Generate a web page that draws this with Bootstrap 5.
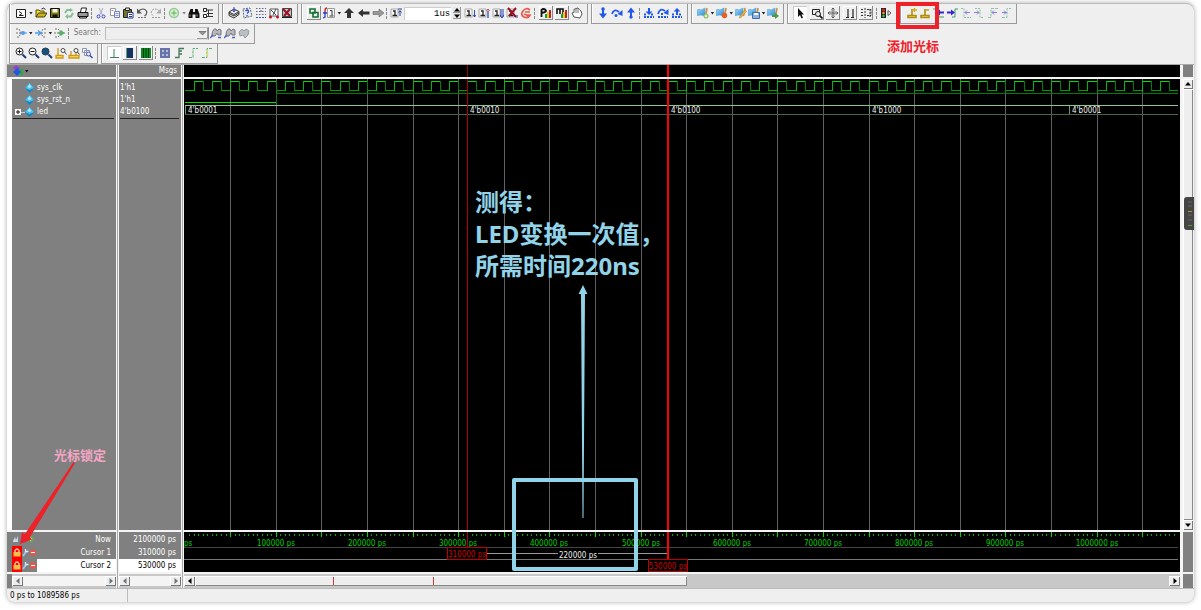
<!DOCTYPE html>
<html lang="zh-CN">
<head>
<meta charset="utf-8">
<meta name="viewport" content="width=device-width, initial-scale=1">
<title>Wave</title>
<link href="https://cdn.jsdelivr.net/npm/bootstrap@5.3.0/dist/css/bootstrap.min.css" rel="stylesheet">
<style>
  :root { --face: #efefef; --pane: #808080; --sky: #91d3e8; --alert: #ee2028; }
  body { font-family: "DejaVu Sans Condensed", "Noto Sans CJK SC", sans-serif; font-size: 8px; line-height: 12px; background: #fff; color: #000; padding: 3px 7px 8px; }
  .app-window { background: var(--face); border-top: 1px solid #bdbdbd; border-radius: 8px; box-shadow: 0 0 5px rgba(0,0,0,.35); height: calc(100vh - 11px); min-height: 300px; }
  button { padding: 0; border: 0; background: none; color: inherit; line-height: 1; }
  .defs { width: 0; height: 0; }

  /* toolbars */
  .tool-rows { padding-left: 2px; height: 60px; }
  .tool-row { gap: 3px; height: 20px; }
  .tool-group { position: relative; padding: 0 4px 1px 5px; border: solid #999; border-width: 0 1px 1px 1px; box-shadow: inset 1px 0 #fff; }
  .g-std { width: 210px; } .g-compile { width: 76px; } .g-sim { width: 287px; } .g-step { width: 97px; }
  .g-mark { width: 93px; } .g-mouse { width: 110px; } .g-cursor { width: 117px; } .g-search { width: 246px; }
  .g-zoom { width: 89px; } .g-format { width: 117px; }
  .ico { width: 12px; height: 12px; flex: none; display: block; }
  .ico svg, .raised svg { width: 12px; height: 12px; display: block; }
  .raised { width: 14px; height: 14px; flex: none; box-shadow: inset -1px -1px #888, inset 1px 1px #fff; padding: 1px; }
  .pressed { background: #fff; box-shadow: inset 1px 1px #ccc; }
  .drop { width: 4px; height: 3px; flex: none; background: #222; clip-path: polygon(0 0, 100% 0, 50% 100%); }
  .split { width: 2px; height: 11px; flex: none; border-left: 1px dashed #888; }
  .faded { opacity: .55; }
  .time-box { width: 47px; height: 13px; border: 1px solid #ccc; border-width: 1px 0 0 1px; padding: 0 1px; text-align: right; font: 9px/12px "Liberation Mono", monospace; background: #fff; }
  .spin { width: 8px; height: 13px; }
  .spin button { width: 8px; height: 6px; background: #e8e8e8; box-shadow: inset -1px -1px #999; }
  .spin svg { display: block; width: 8px; height: 6px; }
  .find-label { color: #777; width: 31px; text-align: center; }
  .find-box { width: 104px; height: 13px; border: 1px solid #bbb; border-right-color: #888; border-bottom-color: #ddd; background: var(--face); appearance: none; }
  .find-wrap { position: relative; height: 13px; }
  .find-wrap svg { position: absolute; right: 1px; top: 1px; width: 11px; height: 11px; pointer-events: none; }
  .mark-frame { position: absolute; left: -5px; top: -2px; width: 43px; height: 27px; border: 4px solid var(--alert); pointer-events: none; }
  .mark-note { position: absolute; left: -14px; top: 32px; font: 700 13px/20px "Noto Sans CJK SC", sans-serif; color: var(--alert); white-space: nowrap; }

  /* wave window */
  .wave-grid { display: grid; grid-template: 12px minmax(0, 1fr) 40px 14px / 109px 62px minmax(0, 1fr) 10px; gap: 2px 3px; padding-right: 1px; border-top: 1px solid #aaa; background: linear-gradient(#aaa, #aaa) 110px 0 / 1px 100% no-repeat, linear-gradient(#aaa, #aaa) 175px 0 / 1px 100% no-repeat, #f4f4f4; }
  .pane { background: var(--pane); color: #fff; overflow: hidden; }
  .names { border-left: 5px solid #fff; position: relative; }
  .sig { height: 12px; white-space: nowrap; }
  .vals .sig { padding-left: 1px; }
  .sig svg { width: 25px; height: 10px; flex: none; }
  .sig-list { padding-top: 3px; }
  .sig-end { border-top: 1px solid #222; margin: 0 2px 0 1px; }
  .now-row, .cur-row { height: 13px; padding-right: 5px; line-height: 14px; }
  .now-row { height: 14px; line-height: 15px; }
  .names-foot { border-left: 5px solid var(--pane); }
  .selected { background: #fff; color: #000; }
  .row-icons { width: 25px; height: 13px; background: var(--pane); flex: none; }
  .row-icons svg { display: block; width: 25px; height: 13px; }
  .screen { background: #000; overflow: hidden; min-width: 0; }
  .screen svg { display: block; width: 100%; height: 100%; }
  .notes { grid-column: 3; grid-row: 1 / 4; position: relative; pointer-events: none; }
  .measure-note { position: absolute; left: 291px; top: 121px; margin: 0; color: var(--sky); font: 700 24px/32px "Noto Sans", "Noto Sans CJK SC", sans-serif; white-space: nowrap; }
  .measure-arrow { position: absolute; left: 394px; bottom: 54px; width: 10px; height: 233px; }
  .measure-frame { position: absolute; left: 328px; bottom: 1px; width: 126px; height: 93px; border: 4px solid var(--sky); border-radius: 2px; }
  .lock-note { position: absolute; left: 47px; bottom: 107px; font: 700 13px/20px "Noto Sans CJK SC", sans-serif; color: #f3a6c3; white-space: nowrap; }
  .notes-left { grid-column: 1; grid-row: 2 / 4; position: relative; pointer-events: none; }
  .lock-arrow { position: absolute; left: 12px; bottom: 27px; width: 60px; height: 84px; }

  /* scroll bars */
  .bar { background: #c8c8c8; display: flex; }
  .bar-h { padding: 2px 0; }
  .bar-h button { width: 11px; flex: none; }
  .bar button { background: #eee; box-shadow: inset 1px 1px #fff, inset -1px -1px #777; display: flex; align-items: center; justify-content: center; }
  .bar button svg { width: 6px; height: 6px; }
  .thumb { background: #eee; box-shadow: inset 1px 1px #fff, inset -1px -1px #888; }
  .hatched { background: #f4f4f4; }
  .bar-names { border-left: 5px solid var(--pane); }
  .thumb-half { width: 492px; position: relative; margin-right: auto; }
  .pin { position: absolute; top: 1px; bottom: 1px; width: 1px; background: #d33; }
  .bar-v { flex-direction: column; position: relative; background: #eee; }
  .bar-v button { height: 10px; flex: none; }
  .dock-tab { position: absolute; left: 1px; top: 118px; width: 10px; height: 33px; background: #454545; border-radius: 3px 0 0 3px; }
  .status { height: 14px; border-top: 1px solid #bbb; padding-left: 3px; line-height: 14px; }
  .status-a { width: 118px; border-right: 1px solid #bbb; }
</style>
</head>
<body>
<svg class="defs position-absolute" aria-hidden="true">
  <defs>
    <linearGradient id="sky" x1="0" y1="0" x2="1" y2="1"><stop offset="0" stop-color="#a5dafa"/><stop offset="1" stop-color="#2f90d4"/></linearGradient>
    <g id="page"><path d="M1.5 2.5h9v8h-9z" fill="#fff" stroke="#222"/><path d="M4 4.5l3 2-3 2M4 8.500h4.500" stroke="#222" fill="none"/></g>
    <g id="flag"><path d="M0 3q2-1.500 4 0l4-2v7q-2 1-4 0l-4 .5z" fill="url(#sky)" stroke="#5ba3d0" stroke-width=".6"/><path d="M10 1L8.500 9" stroke="#c68b3c" stroke-width="1.500"/></g>
    <g id="glass"><circle cx="4.500" cy="4.500" r="3.500" fill="#fff" stroke="#222"/><path d="M7.500 7.500L11 11" stroke="#1e3c78" stroke-width="2"/></g>
    <g id="stand"><path d="M2 8.500h8v2H2zM6 8.500V2" stroke="#b08c10" stroke-width="1.600" fill="#ffe36a"/></g>
    <symbol id="i-new" viewBox="0 0 12 12"><use href="#page"/></symbol>
    <symbol id="i-open" viewBox="0 0 12 12"><path d="M1 10V3h3l1 1h4v2" fill="#f5e04a" stroke="#554d00"/><path d="M1 10l2.500-4H12l-2.500 4z" fill="#c8b420" stroke="#443e00"/><path d="M6.500 2q2-2 4 .5" stroke="#222" fill="none"/></symbol>
    <symbol id="i-save" viewBox="0 0 12 12"><path d="M1.500 1.500h9v9h-9z" fill="#7c7a10" stroke="#111"/><path d="M3.500 2h5v3.500h-5z" fill="#f4f4e0"/><path d="M3.500 7.500h5V10h-5z" fill="#111"/></symbol>
    <symbol id="i-reload" viewBox="0 0 12 12"><path d="M2 6l2-3 4 0M10 6l-2 3.500H4" stroke="#86bd92" stroke-width="2" fill="none"/><path d="M7 1l3 2-3 2zM5 7L2 9.500 5 12z" fill="#86bd92"/></symbol>
    <symbol id="i-print" viewBox="0 0 12 12"><path d="M3.500 5l1-4h5l-1 4" fill="#fff" stroke="#222"/><path d="M1 5.500h10v4H1z" fill="#999" stroke="#111"/><path d="M2.500 9.500h7v1.500h-7z" fill="#ddd" stroke="#111"/></symbol>
    <symbol id="i-cut" viewBox="0 0 12 12"><path d="M4 1l3.500 7M8 1L4.500 8" stroke="#a8a8c8" fill="none"/><circle cx="3.500" cy="9.500" r="1.500" fill="none" stroke="#3948c8"/><circle cx="8.500" cy="9.500" r="1.500" fill="none" stroke="#3948c8"/></symbol>
    <symbol id="i-copy" viewBox="0 0 12 12"><path d="M1.500 1.500h5v7h-5z" fill="#fff" stroke="#999"/><path d="M5.500 4.500h5v6h-5z" fill="#eef" stroke="#7882b4"/><path d="M6.500 6.500h3M6.500 8.500h3M2.500 3.500h2" stroke="#8893c8"/></symbol>
    <symbol id="i-paste" viewBox="0 0 12 12"><path d="M1.500 2.500h8v8h-8z" fill="#7d7420" stroke="#222"/><path d="M3.500 1h4v2.500h-4z" fill="#eee" stroke="#222"/><path d="M5.500 5.500h5.500v5.500H5.500z" fill="#fff" stroke="#223a90"/><path d="M7 7.500h3M7 9.500h3" stroke="#223a90"/></symbol>
    <symbol id="i-undo" viewBox="0 0 12 12"><path d="M2.500 4q5-4 8 0 1 3-2 5" fill="none" stroke="#555" stroke-width="1.200"/><path d="M1 1.500v5h5z" fill="#555"/><path d="M2 10.500h8" stroke="#777" stroke-dasharray="2 1"/></symbol>
    <symbol id="i-redo" viewBox="0 0 12 12"><path d="M9.500 4q-5-4-8 0-1 3 2 5" fill="none" stroke="#999" stroke-dasharray="2 1"/><path d="M11 1.500v5H6z" fill="#aaa"/><path d="M2 10.500h8" stroke="#999" stroke-dasharray="2 1"/></symbol>
    <symbol id="i-plus" viewBox="0 0 12 12"><circle cx="6" cy="6" r="4.500" fill="#d5efd0" stroke="#9ac797" stroke-width="1.400"/><path d="M6 3.500v5M3.500 6h5" stroke="#7cc276" stroke-width="1.500"/></symbol>
    <symbol id="i-bino" viewBox="0 0 12 12"><path d="M2.500 2h2.500v3h2V2h2.500l2 5v4H7.500V7.500h-3V11H.5V7z" fill="#111"/><path d="M2 7.500v2M9 7.500v2" stroke="#999"/></symbol>
    <symbol id="i-tree" viewBox="0 0 12 12"><path d="M1.500 1.500h3v3h-3zM1.500 7.500h3v3h-3z" fill="#fff" stroke="#222"/><path d="M5 3h6M5 6.500h6M5 9.500h6M6.500 3v6" stroke="#333"/></symbol>
    <symbol id="i-comp" viewBox="0 0 12 12"><path d="M1 5l5-3 5 2.500v3L6 11 1 8.500z" fill="#eee" stroke="#333"/><path d="M1 6.500l5 2.500 5-3M1 5l5 2.500 5-3" stroke="#333" fill="none"/><path d="M6 0v4M4.500 3L6 5l1.500-2" stroke="#2846c8" fill="none"/></symbol>
    <symbol id="i-compq" viewBox="0 0 12 12"><path d="M2 2l7-1 2 8-8 2z" fill="#e6eefc" stroke="#667" stroke-dasharray="2 1"/><path d="M4.500 4q2-2 3 0 .5 1-1.500 2.500M6 8v1.500" stroke="#2846c8" fill="none" stroke-width="1.300"/></symbol>
    <symbol id="i-dots" viewBox="0 0 12 12"><path d="M1 1.500h10M1 4.500h10M1 7.500h10" stroke="#667" stroke-dasharray="1.500 1.500"/><path d="M1 10.500h10M6 3v3" stroke="#3355c0" stroke-dasharray="2 1"/></symbol>
    <symbol id="i-sim" viewBox="0 0 12 12"><path d="M2 2h8v7H2z" fill="#fff" stroke="#555"/><path d="M3 3l5 5M8 2l-3 6" stroke="#445"/><circle cx="2.500" cy="10" r="1.500" fill="#c01020"/><circle cx="9.500" cy="10" r="1.500" fill="#c01020"/></symbol>
    <symbol id="i-stopx" viewBox="0 0 12 12"><path d="M1.500 1.500h9v8h-9z" fill="#bcc" stroke="#444"/><path d="M1 10.500h10" stroke="#222"/><path d="M2 2l7 7M9 2L3 9" stroke="#a01020" stroke-width="2"/></symbol>
    <symbol id="i-boxes" viewBox="0 0 12 12"><path d="M2 2h5v4H2zM5 5.500h5v4.500H5z" fill="none" stroke="#127030" stroke-width="1.600"/></symbol>
    <symbol id="i-fdoc" viewBox="0 0 12 12"><path d="M4.500 1.500h7v9h-7z" fill="#f6f6f6" stroke="#999"/><path d="M7 3.500h2v5M6.500 9h4" stroke="#333" fill="none"/><path d="M4 1q-2 0-2 3v2" stroke="#c22" fill="none" stroke-width="1.400"/><path d="M2 5v5l-2 1M0 6h4" stroke="#2343d0" fill="none" stroke-width="1.300"/></symbol>
    <symbol id="i-up" viewBox="0 0 12 12"><path d="M6 1l5 5H8v5H4V6H1z" fill="#333"/></symbol>
    <symbol id="i-left" viewBox="0 0 12 12"><path d="M0 6l5-4v2.500h6.500v3H5V10z" fill="#333"/></symbol>
    <symbol id="i-right" viewBox="0 0 12 12"><path d="M12 6L7 2v2.500H1v3h6V10z" fill="#999" stroke="#666" stroke-width=".6"/></symbol>
    <g id="runpage"><path d="M1 2h7v8H1z" fill="#f8f8f8" stroke="#999" stroke-width=".8"/><path d="M3 4h2v4M2.500 8.500H7" stroke="#222" stroke-width="1.300" fill="none"/></g>
    <symbol id="i-restart" viewBox="0 0 12 12"><use href="#runpage"/><path d="M8 2h4M10 9V4M8.500 5.500L10 3.500 11.500 5.500" stroke="#2440a0" fill="none"/></symbol>
    <symbol id="i-run" viewBox="0 0 12 12"><use href="#runpage"/><path d="M10.500 3v7M9 8l1.500 2L12 8" stroke="#3450c0" fill="none"/></symbol>
    <symbol id="i-cont" viewBox="0 0 12 12"><use href="#runpage"/><path d="M10 4v7" stroke="#3450c0" stroke-width="1.300"/><path d="M8.500 4L10 2l1.500 2" stroke="#d33" fill="none"/></symbol>
    <symbol id="i-all" viewBox="0 0 12 12"><use href="#runpage"/><path d="M9 2v8M11 2v8M8 8l2 3 2-3" stroke="#2440b0" fill="none"/></symbol>
    <symbol id="i-break" viewBox="0 0 12 12"><use href="#runpage"/><path d="M2 1l8 9M10 1L3 9" stroke="#981020" stroke-width="2"/><path d="M11 8v3" stroke="#2440b0"/></symbol>
    <symbol id="i-halt" viewBox="0 0 12 12"><path d="M10 3q-4-3-7 1t1 6q4 2 6-2H6M10 5H5M4 7l5 2" fill="none" stroke="#e65a4c" stroke-width="1.700"/></symbol>
    <symbol id="i-perf" viewBox="0 0 12 12"><path d="M1.500 10V3q2-2 4 0t-4 3" stroke="#111" stroke-width="1.800" fill="none"/><path d="M5 7h2v4H5z" fill="#1a9c3c"/><path d="M7 5h2v6H7z" fill="#e6c81e"/><path d="M9 3h2v8H9z" fill="#c62020"/></symbol>
    <symbol id="i-mem" viewBox="0 0 12 12"><path d="M1 7V2h3v5M4 2h3v5" stroke="#111" stroke-width="1.600" fill="none"/><path d="M5 7h2v4H5z" fill="#1a9c3c"/><path d="M7 5h2v6H7z" fill="#e6c81e"/><path d="M9 3h2v8H9z" fill="#c62020"/></symbol>
    <symbol id="i-hand" viewBox="0 0 12 12"><path d="M3 10L1 6l2-.5V2.500l2-1 2-.5 1.500 1.500L10 4l1 3-2 4z" fill="#fff" stroke="#555"/><path d="M5 2v4M7 2v4" stroke="#777"/></symbol>
    <symbol id="i-in" viewBox="0 0 12 12"><circle cx="6" cy="2" r="1.800" fill="#2058e8"/><path d="M6 11.500L2 6.500h8zM5 3h2v4H5z" fill="#2058e8"/></symbol>
    <symbol id="i-over" viewBox="0 0 12 12"><path d="M1 7q2-6 7-2" fill="none" stroke="#2058e8" stroke-width="1.800"/><path d="M11.500 3v6l-5-2z" fill="#2058e8"/><circle cx="5" cy="8.500" r="1.500" fill="#2058e8"/></symbol>
    <symbol id="i-out" viewBox="0 0 12 12"><path d="M6 .5l4 5H2zM5 5h2v4H5z" fill="#2058e8"/><circle cx="6" cy="10" r="1.700" fill="#2058e8"/></symbol>
    <symbol id="i-in2" viewBox="0 0 12 12"><path d="M6 8L2.500 4.500h7zM5 1h2v4H5z" fill="#2058e8"/><path d="M1 10h10M1 7.500h3M8 7.500h3" stroke="#2058e8" stroke-width="2" stroke-dasharray="2 1"/></symbol>
    <symbol id="i-over2" viewBox="0 0 12 12"><path d="M1 7q2-7 7-3" fill="none" stroke="#2058e8" stroke-width="1.800"/><path d="M11.500 2v6l-5-2z" fill="#2058e8"/><path d="M1 10h10M4 7h3" stroke="#2058e8" stroke-width="2" stroke-dasharray="2 1"/></symbol>
    <symbol id="i-out2" viewBox="0 0 12 12"><path d="M6 1l3.500 3.500h-7zM5 4h2v4H5z" fill="#2058e8"/><path d="M1 10h10M1 7.500h3M8 7.500h3" stroke="#2058e8" stroke-width="2" stroke-dasharray="2 1"/></symbol>
    <symbol id="i-fadd" viewBox="0 0 12 12"><use href="#flag"/><circle cx="9" cy="9" r="2.500" fill="#7db85a"/><path d="M9 7.500v3M7.500 9h3" stroke="#fff"/></symbol>
    <symbol id="i-fdel" viewBox="0 0 12 12"><use href="#flag"/><circle cx="8.500" cy="8.500" r="2.700" fill="#ea5b28"/></symbol>
    <symbol id="i-fedit" viewBox="0 0 12 12"><use href="#flag"/><path d="M4 10.500L10 3l1.500 1.500-6 6.500z" fill="#f1b64a" stroke="#b27a20" stroke-width=".5"/></symbol>
    <symbol id="i-fsave" viewBox="0 0 12 12"><use href="#flag"/><path d="M4.500 5.500h7v6h-7z" fill="#8fb2dc" stroke="#3c6eb4"/><path d="M6 6h4v2H6z" fill="#fff"/></symbol>
    <symbol id="i-fgo" viewBox="0 0 12 12"><use href="#flag"/><path d="M5 8h3V5.500L12 9l-4 3v-2H5z" fill="#4a9c3c"/></symbol>
    <symbol id="i-pick" viewBox="0 0 12 12"><path d="M4 1v9l2-2 1.500 3.500 1.500-.7L7.500 7.500H10z" fill="#111"/></symbol>
    <symbol id="i-zsel" viewBox="0 0 12 12"><path d="M1.500 2.500h7v5h-7z" fill="none" stroke="#222"/><circle cx="7" cy="7" r="2.500" fill="#eee" stroke="#222"/><path d="M8.500 8.500L11.500 11.500" stroke="#111" stroke-width="1.700"/></symbol>
    <symbol id="i-pan" viewBox="0 0 12 12"><path d="M6 1v10M1 6h10M4.500 2.500L6 1l1.500 1.500M4.500 9.500L6 11l1.500-1.500M2.500 4.500L1 6l1.500 1.500M9.500 4.500L11 6 9.500 7.500" stroke="#555" fill="none"/><circle cx="6" cy="6" r="2.500" fill="none" stroke="#999"/></symbol>
    <symbol id="i-two" viewBox="0 0 12 12"><path d="M4 2v8M9 2v8M2 10.500h3M7 10.500h3" stroke="#222" stroke-width="1.200"/></symbol>
    <symbol id="i-edit2" viewBox="0 0 12 12"><path d="M1 2.500h3M1 5.500h3M1 8.500h3M5 1v10M7 2.500h4v6H7M10 2v8" stroke="#333" fill="none" stroke-dasharray="2 1"/></symbol>
    <symbol id="i-light" viewBox="0 0 12 12"><path d="M1 1h5v10H1z" fill="#222"/><circle cx="3.500" cy="3" r="1.500" fill="#f02020"/><circle cx="3.500" cy="6" r="1.300" fill="#e8a020"/><circle cx="3.500" cy="9" r="1.300" fill="#20d040"/><path d="M8 3.500l3 2.500-3 2.500z" fill="#fff" stroke="#555"/></symbol>
    <symbol id="i-cadd" viewBox="0 0 12 12"><use href="#stand"/><path d="M6 3h5M8.500 1v4" stroke="#d8a810" stroke-width="1.400"/></symbol>
    <symbol id="i-cdel" viewBox="0 0 12 12"><use href="#stand"/><path d="M6 3h4" stroke="#c29a10" stroke-width="1.400"/></symbol>
    <symbol id="i-prev" viewBox="0 0 12 12"><path d="M0 2h3v8h8" stroke="#3c9c64" fill="none"/><path d="M3 5.500l4-3v2h4v2H7v2z" fill="#3824d0"/></symbol>
    <symbol id="i-next" viewBox="0 0 12 12"><path d="M6 10h3V2h3" stroke="#3c9c64" fill="none"/><path d="M9 5.500l-4-3v2H1v2h4v2z" fill="#3824d0"/></symbol>
    <symbol id="i-fall1" viewBox="0 0 12 12"><path d="M1 1.500h3v9h7" stroke="#86c8a0" fill="none" stroke-dasharray="2 1"/><path d="M5 5.500h5M7 3.500L5 5.500l2 2" stroke="#8a7cd8" fill="none"/></symbol>
    <symbol id="i-fall2" viewBox="0 0 12 12"><path d="M2 1.500h5v9h4" stroke="#86c8a0" fill="none" stroke-dasharray="2 1"/><path d="M1 5.500h5M4 3.500l2 2-2 2" stroke="#8a7cd8" fill="none"/></symbol>
    <symbol id="i-rise1" viewBox="0 0 12 12"><path d="M1 10.500h3v-9h7" stroke="#86c8a0" fill="none" stroke-dasharray="3 1"/><path d="M5 5.500h5M7 3.500L5 5.500l2 2" stroke="#8a7cd8" fill="none"/></symbol>
    <symbol id="i-rise2" viewBox="0 0 12 12"><path d="M2 10.500h5v-9h4" stroke="#86c8a0" fill="none" stroke-dasharray="3 1"/><path d="M2 5.500h5M4 3.500l2 2-2 2" stroke="#8a7cd8" fill="none"/></symbol>
    <symbol id="i-fork1" viewBox="0 0 12 12"><path d="M1 2h3l2 4-2 4H1M1 6h5" stroke="#777" fill="none" stroke-dasharray="2 1"/><circle cx="8" cy="6" r="2" fill="#4e9cf0"/><path d="M9 6h3" stroke="#4e9cf0"/></symbol>
    <symbol id="i-fork2" viewBox="0 0 12 12"><path d="M11 2H8L6 6l2 4h3M6 6h5" stroke="#777" fill="none" stroke-dasharray="2 1"/><path d="M0 6h5M3 3.500L6 6 3 8.500" stroke="#4e9cf0" stroke-width="1.400" fill="none"/></symbol>
    <symbol id="i-fork3" viewBox="0 0 12 12"><path d="M1 2h3l3 3M1 10h3l3-3M0 6h12" stroke="#777" fill="none" stroke-dasharray="2 1"/><path d="M7 3l3.500 3L7 9 4 6z" fill="#56b268"/></symbol>
    <symbol id="i-srch" viewBox="0 0 12 12"><path d="M2 7q1-6 4-5l1 2 2-2 2 1v5H8L7 6 5 9H2z" fill="#b4b8c0" stroke="#777"/><path d="M0 11l3-3M8 10.500h3" stroke="#4864c8" stroke-width="1.500"/></symbol>
    <symbol id="i-srch2" viewBox="0 0 12 12"><path d="M1 5l3-3 2 2 2-2 3 2-1 4-3 3-2-3-3 1z" fill="#bbc0c4" stroke="#999"/></symbol>
    <symbol id="i-zin" viewBox="0 0 12 12"><use href="#glass"/><path d="M4.500 2.500v4M2.500 4.500h4" stroke="#111"/></symbol>
    <symbol id="i-zout" viewBox="0 0 12 12"><use href="#glass"/><path d="M2.500 4.500h4" stroke="#111"/></symbol>
    <symbol id="i-zfull" viewBox="0 0 12 12"><use href="#glass"/><circle cx="4.500" cy="4.500" r="3.500" fill="#174f78"/></symbol>
    <symbol id="i-zcur" viewBox="0 0 12 12"><path d="M3 1v7M1 8.500h7v2.500H1z" fill="#ffe070" stroke="#cc9914" stroke-width="1.300"/><circle cx="8" cy="3.500" r="2" fill="#fff" stroke="#444"/><path d="M9.500 5l2 2.500" stroke="#445"/></symbol>
    <symbol id="i-zcur2" viewBox="0 0 12 12"><path d="M3 4v4M8 6v3M1 8.500h10v2.500H1z" fill="#ffe070" stroke="#cc9914" stroke-width="1.300"/><circle cx="8" cy="3.500" r="2" fill="#fff" stroke="#444"/><path d="M9.500 5l2 2.500" stroke="#445"/></symbol>
    <symbol id="i-zoth" viewBox="0 0 12 12"><path d="M1.500 1.500h4v4h-4zM3.500 3.500h5v5h-5z" fill="#fff" stroke="#8a94b8"/><circle cx="7.500" cy="7" r="2" fill="#eef" stroke="#4a5c9c"/><path d="M9 8.500l2.500 2.500" stroke="#2d46a8" stroke-width="1.400"/></symbol>
    <symbol id="i-w1" viewBox="0 0 12 12"><path d="M6 2v8M2 10.500h9" stroke="#40805a"/></symbol>
    <symbol id="i-w2" viewBox="0 0 12 12"><path d="M3 1h6v10H3z" fill="#14335e"/><path d="M2.500 1v10" stroke="#60a080"/></symbol>
    <symbol id="i-w3" viewBox="0 0 12 12"><path d="M1 1h10v10H1z" fill="#0c8a24"/><path d="M3.500 1v10M6 1v10M8.500 1v10" stroke="#063c12"/></symbol>
    <symbol id="i-w4" viewBox="0 0 12 12"><path d="M1 1h10v10H1z" fill="#6673a8"/><path d="M3 3h2v2H3zM7 3h2v2H7zM3 7h2v2H3zM7 7h2v2H7z" fill="#b4bedc"/></symbol>
    <symbol id="i-w5" viewBox="0 0 12 12"><path d="M2 10.500h4v-9h5M6 4h3M6 7h3" stroke="#457a5c" fill="none" stroke-width="1.300"/></symbol>
    <symbol id="i-w6" viewBox="0 0 12 12"><path d="M2 10.500h4v-9h5" stroke="#5caa78" fill="none" stroke-dasharray="3 1"/></symbol>
    <symbol id="i-w7" viewBox="0 0 12 12"><path d="M1 10.500h5v-9h5" stroke="#5caa78" fill="none" stroke-dasharray="3 1"/><path d="M6.500 3v7" stroke="#dcdc60" stroke-width="1.300"/></symbol>
    <g id="gem"><path d="M17.500 0L22 5l-4.500 5L13 5z" fill="#0f86c6"/><path d="M17.500 0L22 5l-4.500 2L13 5z" fill="#4cc0f0"/><path d="M17.500 1l2 3-2 1-2-1z" fill="#b4ecff"/></g>
    <symbol id="i-gem" viewBox="0 0 25 10"><use href="#gem"/></symbol>
    <symbol id="i-gemx" viewBox="0 0 25 10"><path d="M9 5.500h4" stroke="#ccc"/><path d="M3 2h6v6H3z" fill="#fff"/><path d="M6 3v4M4 5h4" stroke="#111"/><use href="#gem"/></symbol>
    <g id="wrench"><path d="M11 10l3.500-5" stroke="#a4c4ec" stroke-width="1.700"/><path d="M13.500 3v2.500h3" stroke="#dce8f8" fill="none" stroke-width="1.300"/><circle cx="21" cy="6.500" r="3.200" fill="#e3564c"/><path d="M19 6.500h4" stroke="#fff"/></g>
    <symbol id="i-lock" viewBox="0 0 25 13"><path d="M0 0h10v13H0z" fill="#f00"/><path d="M3 6V4.500q2-3 4 0V6" stroke="#ead9a8" stroke-width="1.300" fill="none"/><path d="M1.500 6h7v4.500h-7z" fill="#f5c04a"/><use href="#wrench"/></symbol>
    <symbol id="i-nowset" viewBox="0 0 25 13"><path d="M1 9l2-4 1 3 2-4v6H1z" fill="#cdd8ea"/><path d="M8 5h3v5H8z" fill="#5a86d0"/><path d="M12 10l2-4" stroke="#eee"/><circle cx="18.500" cy="7" r="3" fill="#58b94a"/><path d="M17 7h3M18.500 5.500v3" stroke="#fff"/></symbol>
    <symbol id="a-l" viewBox="0 0 6 6"><path d="M4.500 0v6L1 3z" fill="currentColor"/></symbol>
    <symbol id="a-r" viewBox="0 0 6 6"><path d="M1.500 0v6L5 3z" fill="currentColor"/></symbol>
    <symbol id="a-u" viewBox="0 0 6 6"><path d="M0 4.500h6L3 1z" fill="currentColor"/></symbol>
    <symbol id="a-d" viewBox="0 0 6 6"><path d="M0 1.500h6L3 5z" fill="currentColor"/></symbol>
  </defs>
</svg>

<main class="app-window d-flex flex-column">
  <div class="tool-rows">
    <div class="tool-row d-flex">
      <div class="tool-group g-std d-flex align-items-center justify-content-between" role="toolbar" aria-label="Standard">
        <button class="ico" aria-label="New"><svg><use href="#i-new"/></svg></button><i class="drop"></i>
        <button class="ico" aria-label="Open"><svg><use href="#i-open"/></svg></button>
        <button class="ico" aria-label="Save"><svg><use href="#i-save"/></svg></button>
        <button class="ico" aria-label="Reload"><svg><use href="#i-reload"/></svg></button>
        <button class="ico" aria-label="Print"><svg><use href="#i-print"/></svg></button><i class="split"></i>
        <button class="ico" aria-label="Cut"><svg><use href="#i-cut"/></svg></button>
        <button class="ico" aria-label="Copy"><svg><use href="#i-copy"/></svg></button>
        <button class="ico" aria-label="Paste"><svg><use href="#i-paste"/></svg></button>
        <button class="ico" aria-label="Undo"><svg><use href="#i-undo"/></svg></button>
        <button class="ico" aria-label="Redo"><svg><use href="#i-redo"/></svg></button><i class="split"></i>
        <button class="ico" aria-label="Add"><svg><use href="#i-plus"/></svg></button><i class="drop faded"></i>
        <button class="ico" aria-label="Find"><svg><use href="#i-bino"/></svg></button>
        <button class="ico" aria-label="Expand"><svg><use href="#i-tree"/></svg></button>
      </div>
      <div class="tool-group g-compile d-flex align-items-center justify-content-between" role="toolbar" aria-label="Compile">
        <button class="ico" aria-label="Compile"><svg><use href="#i-comp"/></svg></button>
        <button class="ico" aria-label="Compile out of date"><svg><use href="#i-compq"/></svg></button>
        <button class="ico" aria-label="Compile all"><svg><use href="#i-dots"/></svg></button>
        <button class="ico" aria-label="Simulate"><svg><use href="#i-sim"/></svg></button>
        <button class="ico" aria-label="End"><svg><use href="#i-stopx"/></svg></button>
      </div>
      <div class="tool-group g-sim d-flex align-items-center justify-content-between" role="toolbar" aria-label="Simulate">
        <button class="raised" aria-label="Environment"><svg><use href="#i-boxes"/></svg></button>
        <button class="ico" aria-label="Source"><svg><use href="#i-fdoc"/></svg></button><i class="drop"></i>
        <button class="ico" aria-label="Up"><svg><use href="#i-up"/></svg></button>
        <button class="ico" aria-label="Back"><svg><use href="#i-left"/></svg></button>
        <button class="ico" aria-label="Forward"><svg><use href="#i-right"/></svg></button><i class="split"></i>
        <button class="ico" aria-label="Restart"><svg><use href="#i-restart"/></svg></button>
        <input class="time-box" aria-label="Run length" value="1us">
        <span class="spin d-flex flex-column"><button aria-label="More"><svg><use href="#a-u"/></svg></button><button aria-label="Less"><svg><use href="#a-d"/></svg></button></span>
        <button class="ico" aria-label="Run"><svg><use href="#i-run"/></svg></button>
        <button class="ico" aria-label="Continue"><svg><use href="#i-cont"/></svg></button>
        <button class="ico" aria-label="Run all"><svg><use href="#i-all"/></svg></button>
        <button class="ico" aria-label="Break"><svg><use href="#i-break"/></svg></button>
        <button class="ico" aria-label="Stop"><svg><use href="#i-halt"/></svg></button><i class="split"></i>
        <button class="raised" aria-label="Performance"><svg><use href="#i-perf"/></svg></button>
        <button class="raised" aria-label="Memory"><svg><use href="#i-mem"/></svg></button>
        <button class="ico" aria-label="Hand"><svg><use href="#i-hand"/></svg></button>
      </div>
      <div class="tool-group g-step d-flex align-items-center justify-content-between" role="toolbar" aria-label="Step">
        <button class="ico" aria-label="Step into"><svg><use href="#i-in"/></svg></button>
        <button class="ico" aria-label="Step over"><svg><use href="#i-over"/></svg></button>
        <button class="ico" aria-label="Step out"><svg><use href="#i-out"/></svg></button><i class="split"></i>
        <button class="ico" aria-label="Step into current"><svg><use href="#i-in2"/></svg></button>
        <button class="ico" aria-label="Step over current"><svg><use href="#i-over2"/></svg></button>
        <button class="ico" aria-label="Step out current"><svg><use href="#i-out2"/></svg></button>
      </div>
      <div class="tool-group g-mark d-flex align-items-center justify-content-between" role="toolbar" aria-label="Bookmarks">
        <button class="ico" aria-label="Add bookmark"><svg><use href="#i-fadd"/></svg></button><i class="drop"></i>
        <button class="ico" aria-label="Delete bookmark"><svg><use href="#i-fdel"/></svg></button><i class="drop"></i>
        <button class="ico" aria-label="Edit bookmark"><svg><use href="#i-fedit"/></svg></button>
        <button class="ico" aria-label="Save bookmark"><svg><use href="#i-fsave"/></svg></button><i class="drop"></i>
        <button class="ico" aria-label="Go to bookmark"><svg><use href="#i-fgo"/></svg></button>
      </div>
      <div class="tool-group g-mouse d-flex align-items-center justify-content-between" role="toolbar" aria-label="Mouse mode">
        <button class="raised pressed" aria-label="Select"><svg><use href="#i-pick"/></svg></button>
        <button class="raised" aria-label="Zoom mode"><svg><use href="#i-zsel"/></svg></button>
        <button class="raised" aria-label="Pan mode"><svg><use href="#i-pan"/></svg></button>
        <button class="raised" aria-label="Two cursor mode"><svg><use href="#i-two"/></svg></button>
        <button class="raised" aria-label="Edit mode"><svg><use href="#i-edit2"/></svg></button><i class="split"></i>
        <button class="ico" aria-label="Stop drawing"><svg><use href="#i-light"/></svg></button>
      </div>
      <div class="tool-group g-cursor d-flex align-items-center justify-content-between" role="toolbar" aria-label="Wave cursor">
        <button class="ico" aria-label="Insert cursor"><svg><use href="#i-cadd"/></svg></button>
        <button class="ico" aria-label="Delete cursor"><svg><use href="#i-cdel"/></svg></button>
        <button class="ico" aria-label="Previous transition"><svg><use href="#i-prev"/></svg></button>
        <button class="ico" aria-label="Next transition"><svg><use href="#i-next"/></svg></button>
        <button class="ico" aria-label="Previous falling edge"><svg><use href="#i-fall1"/></svg></button>
        <button class="ico" aria-label="Next falling edge"><svg><use href="#i-fall2"/></svg></button>
        <button class="ico" aria-label="Previous rising edge"><svg><use href="#i-rise1"/></svg></button>
        <button class="ico" aria-label="Next rising edge"><svg><use href="#i-rise2"/></svg></button>
        <span class="mark-frame"></span>
        <span class="mark-note">添加光标</span>
      </div>
    </div>
    <div class="tool-row d-flex">
      <div class="tool-group g-search d-flex align-items-center justify-content-between" role="toolbar" aria-label="Search">
        <button class="ico" aria-label="Trace drivers"><svg><use href="#i-fork1"/></svg></button><i class="drop"></i>
        <button class="ico" aria-label="Trace readers"><svg><use href="#i-fork2"/></svg></button><i class="drop"></i>
        <button class="ico" aria-label="Trace both"><svg><use href="#i-fork3"/></svg></button><i class="split"></i>
        <label class="find-label" for="find">Search:</label>
        <span class="find-wrap"><select class="find-box d-block" id="find"><option></option></select>
          <svg viewBox="0 0 11 11"><path d="M0 0h11v11H0z" fill="#eee"/><path d="M10.500 0v10.500H0" stroke="#999" fill="none"/><path d="M2 3.500h7L5.500 7z" fill="#999" stroke="#333" stroke-width=".5"/></svg></span>
        <button class="ico" aria-label="Find previous"><svg><use href="#i-srch"/></svg></button>
        <button class="ico" aria-label="Find next"><svg><use href="#i-srch"/></svg></button>
        <button class="ico" aria-label="Find options"><svg><use href="#i-srch2"/></svg></button>
      </div>
    </div>
    <div class="tool-row d-flex">
      <div class="tool-group g-zoom d-flex align-items-center justify-content-between" role="toolbar" aria-label="Zoom">
        <button class="ico" aria-label="Zoom in"><svg><use href="#i-zin"/></svg></button>
        <button class="ico" aria-label="Zoom out"><svg><use href="#i-zout"/></svg></button>
        <button class="ico" aria-label="Zoom full"><svg><use href="#i-zfull"/></svg></button>
        <button class="ico" aria-label="Zoom on cursor"><svg><use href="#i-zcur"/></svg></button>
        <button class="ico" aria-label="Zoom between cursors"><svg><use href="#i-zcur2"/></svg></button>
        <button class="ico" aria-label="Zoom other"><svg><use href="#i-zoth"/></svg></button>
      </div>
      <div class="tool-group g-format d-flex align-items-center justify-content-between" role="toolbar" aria-label="Format">
        <button class="raised pressed" aria-label="Literal"><svg><use href="#i-w1"/></svg></button>
        <button class="raised" aria-label="Logic"><svg><use href="#i-w2"/></svg></button>
        <button class="raised" aria-label="Event"><svg><use href="#i-w3"/></svg></button><i class="split"></i>
        <button class="ico" aria-label="Grid"><svg><use href="#i-w4"/></svg></button>
        <button class="ico" aria-label="Delta"><svg><use href="#i-w5"/></svg></button>
        <button class="ico" aria-label="Event time"><svg><use href="#i-w6"/></svg></button>
        <button class="ico" aria-label="Expand time"><svg><use href="#i-w7"/></svg></button>
      </div>
    </div>
  </div>

  <section class="wave-grid flex-grow-1">
    <div class="pane d-flex align-items-center" style="grid-area:1/1">
      <button class="d-flex align-items-center ps-1" aria-label="Signal menu"><svg width="18" height="12" viewBox="0 0 18 12"><path d="M7 4h5v6H7z" fill="#2da84a"/><path d="M5 0l4 3-3 3-4-3z" fill="#9a3fc8"/><path d="M6 3l4 4-4 4-4-4z" fill="#2456e0"/><path d="M14 5h3.500L15.700 7.500z" fill="#111"/></svg></button>
    </div>
    <div class="pane text-end" style="grid-area:1/2"><span class="pe-1">Msgs</span></div>
    <div class="screen" style="grid-area:1/3"><svg id="head"></svg></div>
    <div class="pane" style="grid-area:1/4"></div>

    <div class="pane names" style="grid-area:2/1">
      <div class="sig-list">
        <div class="sig d-flex align-items-center"><svg><use href="#i-gem"/></svg>sys_clk</div>
        <div class="sig d-flex align-items-center"><svg><use href="#i-gem"/></svg>sys_rst_n</div>
        <div class="sig d-flex align-items-center"><svg><use href="#i-gemx"/></svg>led</div>
        <div class="sig-end"></div>
      </div>
    </div>
    <div class="pane vals" style="grid-area:2/2">
      <div class="sig-list">
        <div class="sig">1'h1</div><div class="sig">1'h1</div><div class="sig">4'b0100</div>
        <div class="sig-end"></div>
      </div>
    </div>
    <div class="screen" style="grid-area:2/3"><svg id="wave"></svg></div>
    <div class="bar bar-v" style="grid-area:2/4">
      <button aria-label="Scroll up"><svg><use href="#a-u"/></svg></button>
      <div class="thumb flex-grow-1"></div>
      <button aria-label="Scroll down"><svg><use href="#a-d"/></svg></button>
      <svg class="dock-tab" viewBox="0 0 10 33"><path d="M4 5h4M4 9h4M4 18h4M4 23h4" stroke="#666"/><path d="M4 14.500h4" stroke="#b8902c"/><path d="M4 28.500h4" stroke="#5a9a3a"/></svg>
    </div>

    <div class="pane names-foot" style="grid-area:3/1">
      <div class="now-row d-flex justify-content-between"><span class="row-icons"><svg><use href="#i-nowset"/></svg></span>Now</div>
      <div class="cur-row d-flex justify-content-between"><span class="row-icons"><svg><use href="#i-lock"/></svg></span>Cursor 1</div>
      <div class="cur-row selected d-flex justify-content-between"><span class="row-icons"><svg><use href="#i-lock"/></svg></span>Cursor 2</div>
    </div>
    <div class="pane text-end" style="grid-area:3/2">
      <div class="now-row">2100000 ps</div><div class="cur-row">310000 ps</div><div class="cur-row selected">530000 ps</div>
    </div>
    <div class="screen" style="grid-area:3/3"><svg id="ruler"></svg></div>
    <div class="pane" style="grid-area:3/4"></div>

    <div class="bar bar-h bar-names text-secondary" style="grid-area:4/1">
      <button aria-label="Scroll names left"><svg><use href="#a-l"/></svg></button><div class="hatched flex-grow-1"></div><button aria-label="Scroll names right"><svg><use href="#a-r"/></svg></button>
    </div>
    <div class="bar bar-h text-secondary" style="grid-area:4/2">
      <button aria-label="Scroll values left"><svg><use href="#a-l"/></svg></button><div class="hatched flex-grow-1"></div><button aria-label="Scroll values right"><svg><use href="#a-r"/></svg></button>
    </div>
    <div class="bar bar-h" style="grid-area:4/3">
      <button aria-label="Scroll wave left"><svg><use href="#a-l"/></svg></button>
      <div class="thumb thumb-half"><i class="pin" style="left:28%"></i><i class="pin" style="left:48.400%"></i></div>
      <button aria-label="Scroll wave right"><svg><use href="#a-r"/></svg></button>
    </div>
    <div class="pane" style="grid-area:4/4"></div>

    <div class="notes">
      <p class="measure-note">测得：<br>LED变换一次值，<br>所需时间220ns</p>
      <svg class="measure-arrow" viewBox="0 0 10 233"><path d="M5 0l4.500 9H7L5.500 233h-1L3 9H.5z" fill="#91d3e8"/></svg>
      <div class="measure-frame"></div>
    </div>
    <div class="notes-left">
      <span class="lock-note">光标锁定</span>
      <svg class="lock-arrow" viewBox="0 0 60 84"><path d="M54.500 1l1.500 1L11 76l2 2.500L1 83 3 71.500l3 1.500z" fill="#ee2028"/></svg>
    </div>
  </section>

  <footer class="status d-flex"><span class="status-a">0 ps to 1089586 ps</span></footer>
</main>

<script>
  // Times are in nanoseconds; the view shows 0 to 1089.586 ns.
  const END = 1089.586, SCALE = 0.912;
  const X = t => Math.floor(1 + t * SCALE);
  const line = (x1, y1, x2, y2, c, w = 1) => {
    const o = w % 2 ? 0.5 : 0;
    return x1 === x2
      ? `<path d="M${x1 + o} ${y1}V${y2}" stroke="${c}" stroke-width="${w}"/>`
      : `<path d="M${x1} ${y1 + o}H${x2}" stroke="${c}" stroke-width="${w}"/>`;
  };
  const text = (x, y, s, c, a = 'start') => `<text x="${x}" y="${y}" fill="${c}" text-anchor="${a}">${s}</text>`;
  const cursors = [310, 530];

  document.getElementById('head').innerHTML =
    line(X(310), 0, X(310), 12, '#900') + line(X(530), 0, X(530), 12, '#f00', 2);

  let w = '';
  for (let t = 50; t < END; t += 50) w += line(X(t), 0, X(t), 2000, '#606060');
  for (let t = 0; t < END; t += 10) {
    const high = (t / 10) % 2 === 1;
    w += line(X(t), high ? 2 : 11, Math.min(X(t + 10), X(END)), high ? 2 : 11, high ? '#00e000' : '#009c00');
    if (t) w += line(X(t), 2, X(t), 12, high ? '#00b800' : '#008000');
  }
  w += line(1, 23, X(100), 23, '#00e800') + line(X(100), 14, X(100), 24, '#007000') + line(X(100), 14, X(END), 14, '#007c00');
  w += line(1, 26, X(END), 26, '#8fc48f') + line(1, 35, X(END), 35, '#46664a');
  for (const [t, v] of [[0, "4'b0001"], [310, "4'b0010"], [530, "4'b0100"], [750, "4'b1000"], [970, "4'b0001"]])
    w += line(X(t), 27, X(t), 35, '#60a070') + text(X(t) + 3, 34, v, '#f0f0f0');
  w += line(X(310), 0, X(310), 2000, '#b00000') + line(X(530), 0, X(530), 2000, '#f00', 2);
  document.getElementById('wave').innerHTML = w;

  let r = '';
  for (let t = 5; t < END; t += 5)
    r += line(X(t), t % 50 ? 2 : 0, X(t), t % 50 ? 4 : 5, t % 50 ? '#00a800' : '#00d800');
  r += text(0, 14, 'ps', '#00d000');
  for (let t = 100; t <= 1000; t += 100) r += text(X(t), 14, t * 1000 + ' ps', '#00d000', 'middle');
  r += line(0, 15, X(END), 15, '#444') + line(0, 27, X(END), 27, '#777');
  r += line(X(310) + 20, 21, X(530), 21, '#999');
  r += line(X(310), 0, X(310), 15, '#b00000') + line(X(530), 0, X(530), 27, '#f00', 2);
  cursors.forEach((t, i) => {
    const y = 15 + i * 12;
    r += `<rect x="${X(t) - 19.5}" y="${y + .5}" width="39" height="12" fill="#000" stroke="#c00000"/>` + text(X(t), y + 10, t * 1000 + ' ps', '#d00000', 'middle');
  });
  const mid = X(420) + 10;
  r += `<rect x="${mid - 20}" y="18" width="40" height="8" fill="#000"/>` + text(mid, 26, '220000 ps', '#f0f0f0', 'middle');
  document.getElementById('ruler').innerHTML = r;
</script>
<script src="https://cdn.jsdelivr.net/npm/bootstrap@5.3.0/dist/js/bootstrap.bundle.min.js"></script>
</body>
</html>
